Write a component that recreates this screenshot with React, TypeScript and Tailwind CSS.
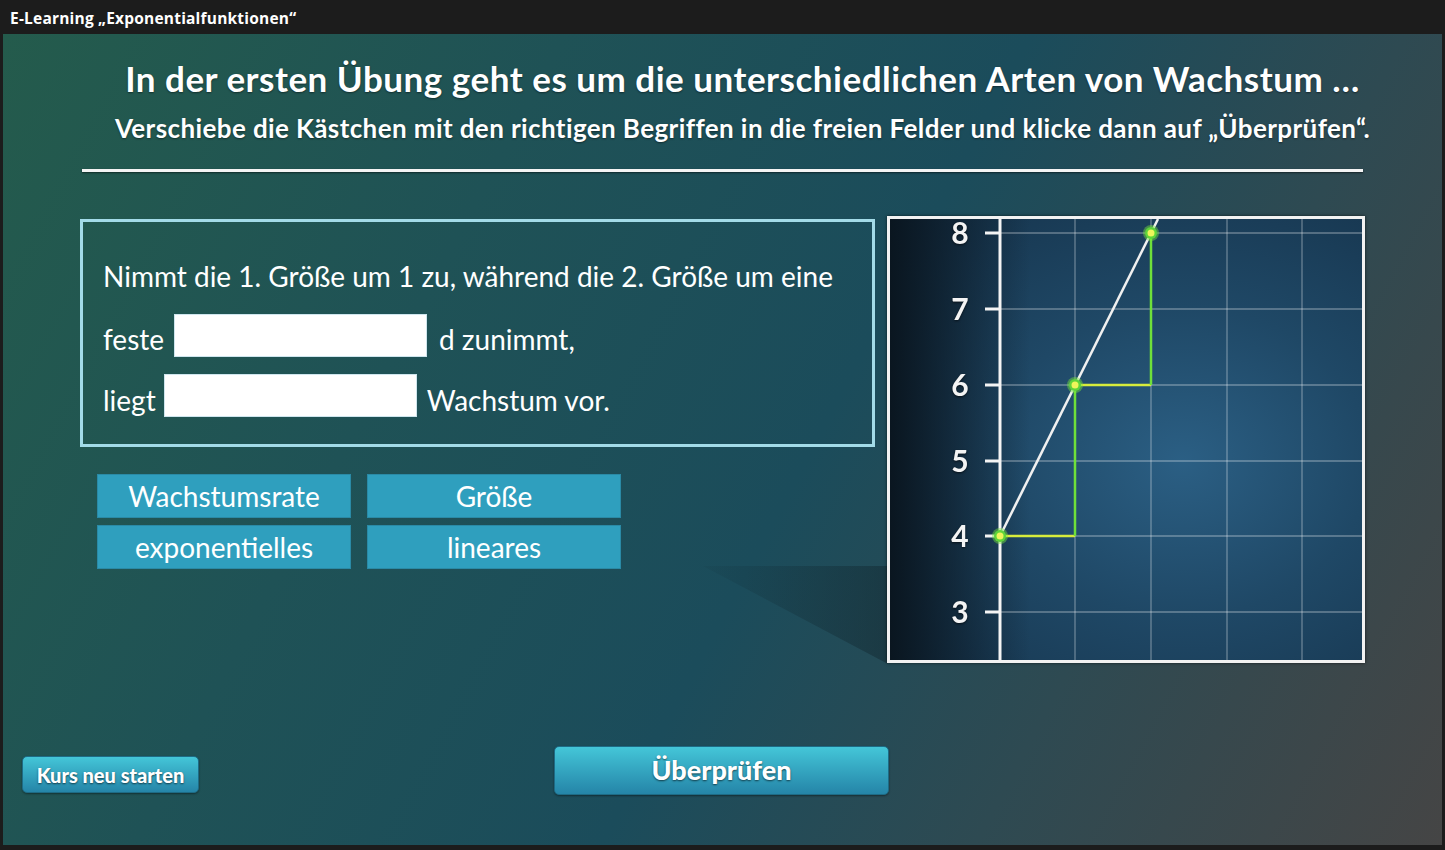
import React from "react";

// Ticks on the y axis: value and y position inside the chart
const ticks = [
  { v: 8, y: 14 },
  { v: 7, y: 90 },
  { v: 6, y: 166 },
  { v: 5, y: 242 },
  { v: 4, y: 317 },
  { v: 3, y: 393 },
];

const gridX = [185, 261, 337, 412];

const chips = ["Wachstumsrate", "Größe", "exponentielles", "lineares"];

const Blank = () => (
  <div className="w-[253px] h-[43px] bg-white border border-[#cfe6ee] shrink-0" />
);

const Chart = () => (
  <div className="relative w-[478px] h-[447px] border-[3px] border-[#f2f2f2] shadow-[0_0_3px_rgba(0,0,0,0.6)] bg-[radial-gradient(ellipse_at_62%_55%,#2b5f84_0%,#1f4866_45%,#15324a_100%)] overflow-hidden shrink-0">
    {/* dark left edge */}
    <div className="absolute inset-y-0 left-0 w-[140px] bg-gradient-to-r from-[#0a1620] to-transparent" />
    <svg className="absolute inset-0" width="472" height="441" viewBox="0 0 472 441">
      {/* horizontal grid lines */}
      {ticks.map((t) => (
        <line key={t.v} x1={110} x2={472} y1={t.y} y2={t.y} stroke="rgba(255,255,255,0.35)" strokeWidth={1.5} />
      ))}
      {/* vertical grid lines */}
      {gridX.map((x) => (
        <line key={x} x1={x} x2={x} y1={0} y2={441} stroke="rgba(255,255,255,0.3)" strokeWidth={1.5} />
      ))}
      {/* axis */}
      <line x1={110} x2={110} y1={0} y2={441} stroke="#f4f4f4" strokeWidth={3} />
      {ticks.map((t) => (
        <g key={"t" + t.v}>
          <line x1={95} x2={110} y1={t.y} y2={t.y} stroke="#f4f4f4" strokeWidth={3} />
          <text
            x={70}
            y={t.y + 11}
            textAnchor="middle"
            fill="#f4f4f4"
            fontFamily="Lato, 'Open Sans', sans-serif"
            fontWeight={700}
            fontSize={30}
            style={{ filter: "drop-shadow(0 1px 1px rgba(0,0,0,0.6))" }}
          >
            {t.v}
          </text>
        </g>
      ))}
      {/* growth steps */}
      <line x1={110} x2={185} y1={317} y2={317} stroke="#d7ec3c" strokeWidth={2.5} />
      <line x1={185} x2={261} y1={166} y2={166} stroke="#d7ec3c" strokeWidth={2.5} />
      <line x1={185} x2={185} y1={317} y2={166} stroke="#6fe03a" strokeWidth={2.5} />
      <line x1={261} x2={261} y1={166} y2={14} stroke="#6fe03a" strokeWidth={2.5} />
      {/* straight line */}
      <line x1={110} y1={317} x2={268} y2={0} stroke="#f0f0f0" strokeWidth={2.5} />
      {[
        [110, 317],
        [185, 166],
        [261, 14],
      ].map(([x, y]) => (
        <g key={x}>
          <circle cx={x} cy={y} r={8} fill="rgba(120,230,60,0.45)" />
          <circle cx={x} cy={y} r={6} fill="#5ed43a" />
          <circle cx={x} cy={y} r={3.5} fill="#eef55a" />
        </g>
      ))}
    </svg>
  </div>
);

export default function App() {
  return (
    <div className="w-full h-[850px] bg-[#1c1c1c] flex flex-col font-['Lato','Open_Sans',sans-serif] text-white overflow-hidden">
      {/* Title bar */}
      <div className="h-[34px] flex items-center pl-[10px] pt-[3px] shrink-0">
        <span className="font-['Open_Sans',sans-serif] font-bold text-[15.5px] tracking-[0.2px]">
          E-Learning „Exponentialfunktionen“
        </span>
      </div>

      {/* Stage */}
      <div className="relative flex-1 mx-[3px] mb-[5px] flex flex-col bg-[linear-gradient(118deg,#245b4c_0%,#1f5256_30%,#1b4c5b_55%,#2e4a52_75%,#454545_100%)]">
        {/* shadow cast by the chart */}
        <div className="absolute left-[700px] top-[532px] w-[185px] h-[98px] bg-gradient-to-r from-[rgba(10,25,32,0.05)] to-[rgba(10,25,32,0.35)] [clip-path:polygon(0_0,100%_0,100%_100%)]" />

        {/* Heading */}
        <div className="pt-[24px] pl-[40px] text-center [text-shadow:0_1px_2px_rgba(0,0,0,0.45)]">
          <h1 className="text-[35px] leading-[40px] font-bold tracking-[0.5px]">
            In der ersten Übung geht es um die unterschiedlichen Arten von Wachstum …
          </h1>
          <p className="mt-[15px] text-[26px] leading-[30px] font-bold tracking-[0.4px]">
            Verschiebe die Kästchen mit den richtigen Begriffen in die freien Felder und klicke dann auf „Überprüfen“.
          </p>
        </div>

        <div className="mx-[79px] mt-[26px] h-[3px] bg-[#f4f4f4] shadow-[0_1px_2px_rgba(0,0,0,0.5)]" />

        {/* Exercise */}
        <div className="relative flex pl-[77px] mt-[44px] gap-[12px]">
          <div className="flex flex-col">
            <div className="mt-[3px] w-[795px] h-[228px] border-[3px] border-[#a3dbe8] pl-[20px] pt-[32px] flex flex-col gap-[16px] text-[28px]">
              <div className="h-[44px] flex items-center">
                Nimmt die 1. Größe um 1 zu, während die 2. Größe um eine
              </div>
              <div className="h-[43px] flex items-center gap-[10px]">
                <span className="pt-[6px]">feste</span>
                <Blank />
                <span className="pt-[6px] pl-[2px]">d zunimmt,</span>
              </div>
              <div className="mt-[1px] h-[43px] flex items-center gap-[8px]">
                <span className="pt-[8px]">liegt</span>
                <Blank />
                <span className="pt-[8px] pl-[2px]">Wachstum vor.</span>
              </div>
            </div>

            <div className="mt-[27px] ml-[17px] grid grid-cols-[254px_254px] gap-x-[16px] gap-y-[7px]">
              {chips.map((c) => (
                <div
                  key={c}
                  className="h-[44px] bg-[#2f9fbe] border border-[#2a8aa6] flex items-center justify-center text-[28px]"
                >
                  {c}
                </div>
              ))}
            </div>
          </div>

          <Chart />
        </div>

        {/* Bottom buttons */}
        <div className="mt-auto flex items-end pl-[19px] pb-[50px]">
          <button className="mb-[2px] w-[177px] h-[37px] rounded-[5px] bg-gradient-to-b from-[#44c6d8] to-[#2585a8] border border-[#1e6b85] text-[20px] font-black [text-shadow:0_1px_2px_rgba(0,0,0,0.6)] shadow-[0_1px_2px_rgba(0,0,0,0.4)]">
            Kurs neu starten
          </button>
          <button className="ml-[355px] w-[335px] h-[49px] rounded-[5px] bg-gradient-to-b from-[#44c6d8] to-[#2585a8] border border-[#1e6b85] text-[27px] font-black [text-shadow:0_1px_2px_rgba(0,0,0,0.6)] shadow-[0_1px_2px_rgba(0,0,0,0.4)]">
            Überprüfen
          </button>
        </div>
      </div>
    </div>
  );
}
